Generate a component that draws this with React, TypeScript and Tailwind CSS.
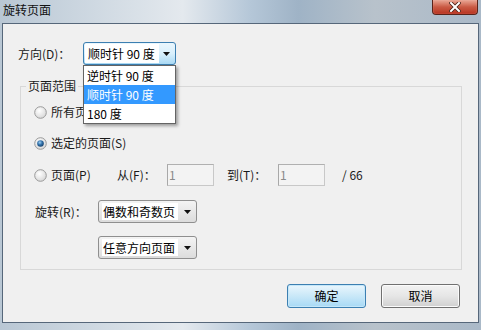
import React from "react";

const font = { fontFamily: '"Noto Sans CJK SC", "Liberation Sans", sans-serif' };

function Radio({ checked }: { checked?: boolean }) {
  return (
    <svg width="13" height="13" viewBox="0 0 13 13" className="shrink-0">
      <defs>
        <radialGradient id={checked ? "rg1" : "rg0"} cx="0.4" cy="0.35" r="0.7">
          <stop offset="0" stopColor="#ffffff" />
          <stop offset="1" stopColor="#d6d6d6" />
        </radialGradient>
        <radialGradient id="dot" cx="0.4" cy="0.35" r="0.7">
          <stop offset="0" stopColor="#9fd0f3" />
          <stop offset="0.5" stopColor="#2f6fa8" />
          <stop offset="1" stopColor="#163e66" />
        </radialGradient>
      </defs>
      <circle cx="6.5" cy="6.5" r="5.8" fill={`url(#${checked ? "rg1" : "rg0"})`} stroke="#9a9a9a" strokeWidth="1" />
      {checked && <circle cx="6.5" cy="6.5" r="3.3" fill="url(#dot)" />}
    </svg>
  );
}

function Arrow() {
  return (
    <svg width="7" height="4" viewBox="0 0 7 4">
      <path d="M0 0 L7 0 L3.5 4 Z" fill="#111" />
    </svg>
  );
}

function Combo({ text }: { text: string }) {
  return (
    <div className="w-[99px] h-[23px] rounded-[3px] border border-[#8f8f8f] bg-gradient-to-b from-[#f4f4f4] to-[#dcdcdc] flex items-center pl-[3px]">
      <span className="bg-white h-[17px] leading-[17px] pl-[1px] pr-[3px] text-[12px] text-black">{text}</span>
      <div className="flex-1 flex items-center justify-center pt-[1px]">
        <Arrow />
      </div>
    </div>
  );
}

function Input() {
  return (
    <div className="w-[47px] h-[22px] border border-[#c8c8c8] border-t-[#b0b0b0] border-l-[#a8a8a8] bg-[#f3f3f3] text-[12px] text-[#8a8a8a] leading-[20px] pl-[1px]">
      1
    </div>
  );
}

export default function App() {
  return (
    <div
      className="w-[481px] h-[330px] overflow-hidden flex flex-col bg-[linear-gradient(90deg,#b9c7d4_0%,#cfd9e2_20%,#e4e9ee_38%,#b5c7d8_52%,#9fb3c6_62%,#b8c2cb_78%,#aab9c8_100%)]"
      style={font}
    >
      <div className="h-[23px] flex items-start justify-between">
        <div className="pl-[3px] pt-[2px] text-[12px] leading-[16px] text-[#111]">旋转页面</div>
        <div className="mr-[3px] w-[46px] h-[15px] rounded-b-[4px] border border-t-0 border-[#5a2319] bg-gradient-to-b from-[#e9a796] via-[#c95a44] to-[#b8321f] flex items-center justify-center shadow-[inset_0_0_1px_#f3c4b8]">
          <svg width="12" height="10" viewBox="0 0 12 10">
            <path d="M2 1 L10 9 M10 1 L2 9" stroke="#4a2218" strokeWidth="3.6" strokeLinecap="square" />
            <path d="M2 1 L10 9 M10 1 L2 9" stroke="#ffffff" strokeWidth="2" strokeLinecap="square" />
          </svg>
        </div>
      </div>
      <div className="mx-[2px] h-[300px] border border-[#56677a] bg-[#f0f0f0] flex flex-col text-[12px] text-[#1a1a1a]">
        <div className="mt-[18px] pl-[15px] flex items-center h-[23px]">
          <div className="w-[65px]">方向(D)：</div>
          <div className="relative w-[93px] h-[23px]">
            <div className="w-full h-full rounded-[3px] border border-[#3c7fb1] bg-gradient-to-b from-[#eaf6fd] via-[#d9f0fc] to-[#a9d9f4] flex items-center pl-[1px]">
              <span className="bg-white h-[19px] leading-[19px] pl-[3px] pr-[4px] text-black">顺时针 90 度</span>
              <div className="flex-1 flex items-center justify-center pt-[1px]">
                <Arrow />
              </div>
            </div>
            <div className="absolute left-0 top-full w-[93px] bg-white border border-[#646464] shadow-[2px_2px_3px_rgba(0,0,0,0.35)] z-10">
              <div className="h-[19px] leading-[19px] pl-[3px] text-black">逆时针 90 度</div>
              <div className="h-[19px] leading-[19px] pl-[3px] text-white bg-[#3399ff]">顺时针 90 度</div>
              <div className="h-[19px] leading-[19px] pl-[3px] text-black">180 度</div>
            </div>
          </div>
        </div>

        <fieldset className="ml-[17px] mt-[13px] w-[442px] border border-[#d8d8d8] p-0 m-0">
          <legend className="ml-[5px] px-[2px] leading-[16px]">页面范围</legend>
          <div className="pl-[13px] pt-[7px] pb-[10px] flex flex-col">
            <div className="h-[22px] flex items-center gap-[4px]">
              <Radio />
              <span>所有页面(A)</span>
            </div>
            <div className="mt-[9px] h-[22px] flex items-center gap-[4px]">
              <Radio checked />
              <span>选定的页面(S)</span>
            </div>
            <div className="mt-[10px] h-[22px] flex items-center">
              <div className="w-[83px] flex items-center gap-[4px]">
                <Radio />
                <span>页面(P)</span>
              </div>
              <div className="w-[50px]">从(F)：</div>
              <Input />
              <div className="ml-[13px] w-[51px]">到(T)：</div>
              <Input />
              <div className="ml-[17px]">/ 66</div>
            </div>
            <div className="mt-[14px] h-[23px] flex items-center">
              <div className="w-[64px] pl-[1px]">旋转(R)：</div>
              <Combo text="偶数和奇数页" />
            </div>
            <div className="mt-[13px] h-[23px] flex items-center pl-[64px]">
              <Combo text="任意方向页面" />
            </div>
          </div>
        </fieldset>

        <div className="mt-[14px] flex justify-end gap-[15px] pr-[18px]">
          <button className="w-[79px] h-[24px] rounded-[3px] border border-[#3c7fb1] bg-gradient-to-b from-[#eaf6fd] via-[#c9e8f8] to-[#a7d9f5] shadow-[inset_0_0_0_1px_#c5e7f9] text-[12px] text-black">
            确定
          </button>
          <button className="w-[79px] h-[24px] rounded-[3px] border border-[#707070] bg-gradient-to-b from-[#f2f2f2] via-[#e6e6e6] to-[#d0d0d0] shadow-[inset_0_0_0_1px_#fbfbfb] text-[12px] text-black">
            取消
          </button>
        </div>
      </div>
    </div>
  );
}
